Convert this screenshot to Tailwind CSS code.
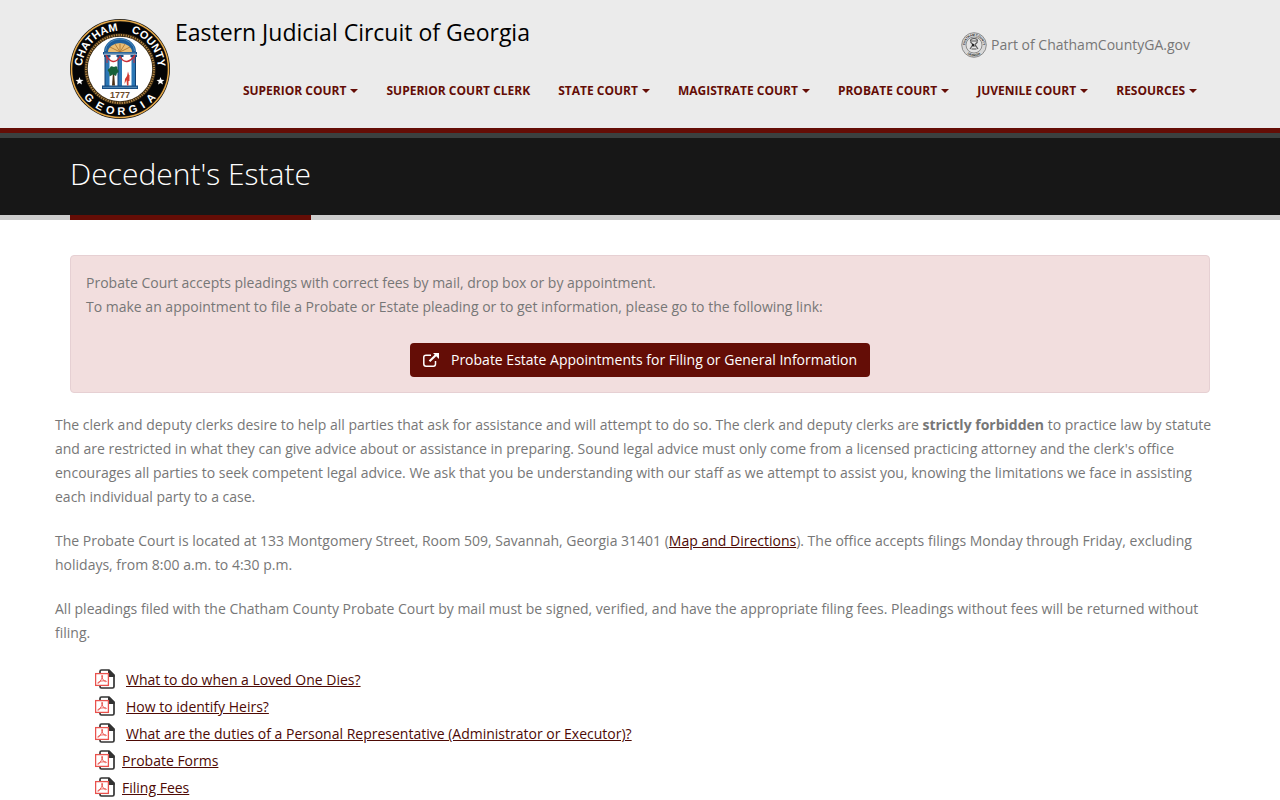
<!DOCTYPE html>
<html lang="en">
<head>
    <meta charset="UTF-8">
    <meta name="viewport" content="width=device-width, initial-scale=1.0">
    <title>Decedent's Estate - Eastern Judicial Circuit of Georgia</title>
    <script src="https://cdn.jsdelivr.net/npm/@tailwindcss/browser@4"></script>
</head>
<body class="bg-white font-['Open_Sans',sans-serif] text-sm leading-6 text-[#777777]">
    <!-- Shared icons -->
    <svg class="hidden" aria-hidden="true">
        <symbol id="pdf" viewBox="0 0 20 20">
            <path d="M5 5V2.500Q5 1 6.500 1H14L19 6V17.500Q19 19 17.500 19H6.500Q5 19 5 17.500V16" fill="#fff" stroke="#333" stroke-width="1.700"/>
            <path d="M13 1H14.500L19.500 6V8H14.500Q13 8 13 6.500Z" fill="#333"/>
            <rect x=".6" y="4.600" width="12.800" height="11.800" fill="#fff" stroke="#e9524d" stroke-width="1.300"/>
            <path d="M6.800 6.300Q8 6 7.500 8T3.500 14.200Q2.300 14.600 3 13.500Q5 11.500 10.500 11.700Q12.200 12.200 10.800 12.900Q8 12 6.800 8Q6.500 6.700 6.800 6.300" fill="none" stroke="#e9524d" stroke-width=".9"/>
        </symbol>
        <symbol id="caret" viewBox="0 0 8 4"><path d="M0 0H8L4 4Z" fill="currentColor"/></symbol>
    </svg>

    <header class="border-b-5 border-[#640d06] bg-[#ebebeb]">
        <div class="mx-auto flex h-32 max-w-[1170px] px-[15px]">
            <a href="#" class="mt-[19px] size-[100px] shrink-0" aria-label="Chatham County Georgia">
                <svg viewBox="0 0 100 100" class="size-full">
                    <defs>
                        <path id="arcTop" d="M13.500 60.500A38 38 0 1 1 86.500 60.500"/>
                        <path id="arcBottom" d="M4 50A46 46 0 0 0 96 50"/>
                    </defs>
                    <circle cx="50" cy="50" r="50" fill="#111"/>
                    <circle cx="50" cy="50" r="48.500" fill="none" stroke="#e5a847" stroke-width="1.500"/>
                    <circle cx="50" cy="50" r="47" fill="#050505"/>
                    <circle cx="50" cy="50" r="34" fill="#fff" stroke="#3d2c14" stroke-width="3.500"/>
                    <circle cx="50" cy="50" r="34" fill="none" stroke="#b98a45" stroke-width="2" stroke-dasharray="1.200 1.200"/>
                    <g fill="#fff" font-family="Liberation Sans, sans-serif" font-size="11" font-weight="700" text-anchor="middle">
                        <text><textPath href="#arcTop" startOffset="29%">CHATHAM</textPath></text>
                        <text><textPath href="#arcTop" startOffset="74.500%">COUNTY</textPath></text>
                        <text><textPath href="#arcBottom" startOffset="24%">G</textPath></text>
                        <text><textPath href="#arcBottom" startOffset="34%">E</textPath></text>
                        <text><textPath href="#arcBottom" startOffset="42.500%">O</textPath></text>
                        <text><textPath href="#arcBottom" startOffset="51%">R</textPath></text>
                        <text><textPath href="#arcBottom" startOffset="60%">G</textPath></text>
                        <text><textPath href="#arcBottom" startOffset="68%">I</textPath></text>
                        <text><textPath href="#arcBottom" startOffset="76%">A</textPath></text>
                    </g>
                    <path id="star" d="M9.500 58l1 2.800 3 .1-2.300 1.800.8 2.900-2.500-1.700-2.500 1.700.8-2.900-2.300-1.800 3-.1Z" fill="#fff"/>
                    <use href="#star" x="81"/>
                    <!-- Arch -->
                    <path d="M34 33A16 14 0 0 1 66 33Z" fill="#1e5e9a"/>
                    <path d="M35.500 32A14.500 12 0 0 1 64.500 32" fill="none" stroke="#6aa9d6" stroke-width=".6"/>
                    <path d="M38 33A12 9 0 0 1 62 33Z" fill="#e9bd74"/>
                    <path d="M50 33V24.500M50 33L45 25M50 33L55 25M50 33L40 28M50 33L60 28" stroke="#a8702a" stroke-width=".8"/>
                    <path d="M33 33H67V35.500H33Z" fill="#174d84"/>
                    <path d="M34 34.200H66" stroke="#8cc0e2" stroke-width=".7"/>
                    <path d="M35 37H39.500V67H35ZM48 36H52V67H48ZM61.500 37H66V67H61.500Z" fill="#2b77b5"/>
                    <path d="M35 38V67M48 38V67M65.500 38V67" stroke="#123f70" stroke-width="1"/>
                    <path d="M32 66.500H68V70H32ZM34 36H40.500V38H34ZM46.500 36H53.500V38H46.500ZM60.500 36H67V38H60.500Z" fill="#174d84"/>
                    <path d="M33 68.300H67" stroke="#79b5db" stroke-width=".7"/>
                    <path d="M36 36Q39 42 43 42.500T50 37.500Q53 43 57 42.500T65 36" fill="none" stroke="#c9303a" stroke-width="1.500"/>
                    <path d="M37 37V44M64 37V44" stroke="#c9303a" stroke-width="1"/>
                    <!-- Tree and figure -->
                    <path d="M43 53L42 66.500H45L44 53Z" fill="#4d3218"/>
                    <path d="M39 53Q36 51 40 49Q40 46 44 48Q48 46 47.500 50Q50 53 47 54L46 57L43 55.500L39.500 57.500Z" fill="#176038"/>
                    <path d="M58 52.500L59 56H59.500V62H58.500V66.500H57L56.500 61L54.500 65L55 60L57 57Z" fill="#d33a30"/>
                    <text x="50" y="79" fill="#6b4928" font-family="Liberation Sans, sans-serif" font-size="9" font-weight="700" text-anchor="middle">1777</text>
                </svg>
            </a>
            <div class="flex grow flex-col">
                <div class="flex items-start justify-between pt-4 pr-5 pl-[5px]">
                    <a href="#" class="text-[23px] leading-8 text-black">Eastern Judicial Circuit of Georgia</a>
                    <a href="#" class="mt-4 flex items-center gap-1">
                        <svg viewBox="0 0 26 26" class="size-[26px]">
                            <defs>
                                <path id="miniTop" d="M4 13A9 9 0 0 1 22 13"/>
                                <path id="miniBottom" d="M1.800 13A11.200 11.200 0 0 0 24.200 13"/>
                            </defs>
                            <circle cx="13" cy="13" r="12.300" fill="#d8d8d8" stroke="#777" stroke-width=".8"/>
                            <circle cx="13" cy="13" r="8" fill="#e4e4e4" stroke="#777" stroke-width=".8"/>
                            <g fill="#222" font-family="Liberation Sans, sans-serif" font-size="3" font-weight="700" text-anchor="middle">
                                <text><textPath href="#miniTop" startOffset="50%">CHATHAM COUNTY</textPath></text>
                                <text><textPath href="#miniBottom" startOffset="50%">GEORGIA</textPath></text>
                            </g>
                            <path d="M9.500 9A3.500 2.500 0 0 1 16.500 9ZM9.500 10L12 12.500L9 17M16.500 10L14 12.500L17 17M10.500 17H15.500M11 14H15" fill="none" stroke="#555" stroke-width="1.100"/>
                            <circle cx="12" cy="13" r="1.200" fill="#222"/>
                        </svg>
                        Part of ChathamCountyGA.gov
                    </a>
                </div>
                <nav class="flex justify-end gap-7 pt-[23px] pr-[13px] text-xs leading-5 font-bold whitespace-nowrap text-[#640d06] uppercase">
                    <a href="#" class="flex items-center gap-1">Superior Court <svg class="h-1 w-2"><use href="#caret"/></svg></a>
                    <a href="#">Superior Court Clerk</a>
                    <a href="#" class="flex items-center gap-1">State Court <svg class="h-1 w-2"><use href="#caret"/></svg></a>
                    <a href="#" class="flex items-center gap-1">Magistrate Court <svg class="h-1 w-2"><use href="#caret"/></svg></a>
                    <a href="#" class="flex items-center gap-1">Probate Court <svg class="h-1 w-2"><use href="#caret"/></svg></a>
                    <a href="#" class="flex items-center gap-1">Juvenile Court <svg class="h-1 w-2"><use href="#caret"/></svg></a>
                    <a href="#" class="flex items-center gap-1">Resources <svg class="h-1 w-2"><use href="#caret"/></svg></a>
                </nav>
            </div>
        </div>
    </header>

    <section class="border-t-5 border-t-[#3b4040] bg-[#171717]">
        <div class="bg-linear-to-t from-[#cccccc] from-[5px] to-transparent to-[5px]">
            <div class="mx-auto max-w-[1170px] px-[15px]">
                <h1 class="inline-block border-b-5 border-[#640d06] pt-4 pb-[21px] align-top text-3xl leading-10 font-light text-white">Decedent's Estate</h1>
            </div>
        </div>
    </section>

    <main class="mx-auto max-w-[1170px] pt-[35px]">
        <div class="mx-[15px] mb-5 rounded-sm border border-[#e6d0d3] bg-[#f2dede] p-[15px]">
            <p>Probate Court accepts pleadings with correct fees by mail, drop box or by appointment.<br>
            To make an appointment to file a Probate or Estate pleading or to get information, please go to the following link:</p>
            <div class="mt-6 flex justify-center">
                <a href="#" class="flex h-[34px] items-center gap-3 rounded-sm bg-[#640d06] px-[13px] text-white">
                    <svg viewBox="0 0 16 14" class="h-[14px] w-4" fill="none" stroke="currentColor">
                        <path d="M8 2.200H3Q.8 2.200 .8 4.300V11Q.8 13.200 3 13.200H10.500Q12.500 13.200 12.500 11V8" stroke-width="1.500"/>
                        <path d="M6.500 8.200L13 2" stroke-width="2.200"/>
                        <path d="M10 0H16V6Z" fill="currentColor" stroke="none"/>
                    </svg>
                    Probate Estate Appointments for Filing or General Information
                </a>
            </div>
        </div>

        <p class="mb-5">The clerk and deputy clerks desire to help all parties that ask for assistance and will attempt to do so. The clerk and deputy clerks are <strong>strictly forbidden</strong> to practice law by statute and are restricted in what they can give advice about or assistance in preparing. Sound legal advice must only come from a licensed practicing attorney and the clerk's office encourages all parties to seek competent legal advice. We ask that you be understanding with our staff as we attempt to assist you, knowing the limitations we face in assisting each individual party to a case.</p>
        <p class="mb-5">The Probate Court is located at 133 Montgomery Street, Room 509, Savannah, Georgia 31401 (<a href="#" class="text-[#4d0a05] underline">Map and Directions</a>). The office accepts filings Monday through Friday, excluding holidays, from 8:00 a.m. to 4:30 p.m.</p>
        <p class="mb-5">All pleadings filed with the Chatham County Probate Court by mail must be signed, verified, and have the appropriate filing fees. Pleadings without fees will be returned without filing.</p>

        <ul class="pt-px pl-10 leading-[27px] text-[#4d0a05]">
            <li class="flex gap-[11px]"><svg class="mt-[3px] size-5"><use href="#pdf"/></svg><a href="#" class="underline">What to do when a Loved One Dies?</a></li>
            <li class="flex gap-[11px]"><svg class="mt-[3px] size-5"><use href="#pdf"/></svg><a href="#" class="underline">How to identify Heirs?</a></li>
            <li class="flex gap-[11px]"><svg class="mt-[3px] size-5"><use href="#pdf"/></svg><a href="#" class="underline">What are the duties of a Personal Representative (Administrator or Executor)?</a></li>
            <li class="flex gap-[7px]"><svg class="mt-[3px] size-5"><use href="#pdf"/></svg><a href="#" class="underline">Probate Forms</a></li>
            <li class="flex gap-[7px]"><svg class="mt-[3px] size-5"><use href="#pdf"/></svg><a href="#" class="underline">Filing Fees</a></li>
        </ul>
    </main>
</body>
</html>
